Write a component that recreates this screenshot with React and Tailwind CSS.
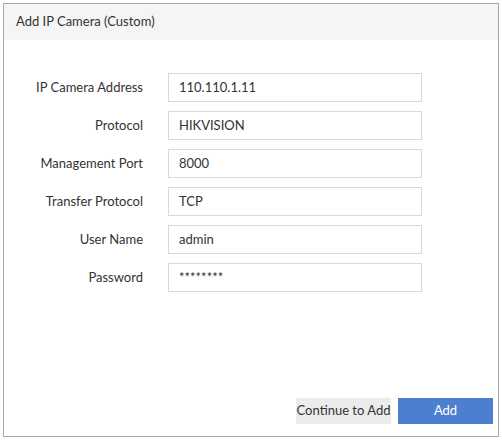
const fields = [
  { label: 'IP Camera Address', value: '110.110.1.11' },
  { label: 'Protocol', value: 'HIKVISION' },
  { label: 'Management Port', value: '8000' },
  { label: 'Transfer Protocol', value: 'TCP' },
  { label: 'User Name', value: 'admin' },
  { label: 'Password', value: '********' },
]

export default function App() {
  return (
    <div
      className="w-[502px] h-[440px] bg-white p-[3px] text-[13px] text-[#333]"
      style={{ fontFamily: 'Lato, "Open Sans", sans-serif' }}
    >
      <div className="h-full border border-[#a8a8a8] flex flex-col">
        <div className="h-9 bg-[#f5f5f5] px-3 flex items-center">Add IP Camera (Custom)</div>

        <div className="mt-[33px] flex flex-col gap-[9px]">
          {fields.map((f) => (
            <div key={f.label} className="flex items-center h-[29px]">
              <div className="w-[139px] text-right">{f.label}</div>
              <div className="ml-[25px] w-[254px] h-full border border-[#d9d9d9] flex items-center px-[10px]">
                {f.value}
              </div>
            </div>
          ))}
        </div>

        <div className="mt-auto flex justify-end gap-[7px] pr-[5px] pb-[12px]">
          <button className="w-[95px] h-[26px] bg-[#ececec] text-[#333] whitespace-nowrap">Continue to Add</button>
          <button className="w-[95px] h-[26px] bg-[#4d7fd0] text-white">Add</button>
        </div>
      </div>
    </div>
  )
}
